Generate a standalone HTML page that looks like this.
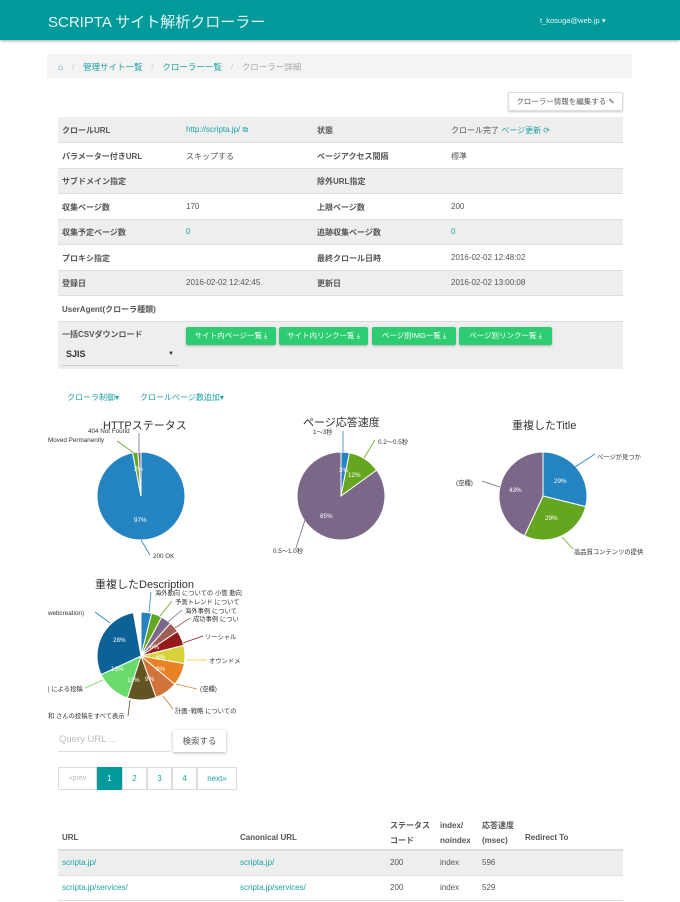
<!DOCTYPE html>
<html><head><meta charset="utf-8">
<style>
*{box-sizing:border-box;margin:0;padding:0}
body{width:680px;height:902px;overflow:hidden;background:#fff;font-family:"Liberation Sans","Noto Sans CJK JP",sans-serif;color:#555;font-size:8px;position:relative}
.a{position:absolute;white-space:nowrap}
.hdr{position:absolute;left:0;top:0;width:680px;height:40px;background:#009a9a;box-shadow:0 1px 3px rgba(0,0,0,.35)}
.teal{color:#1aa3a3}
.row{position:absolute;left:58px;width:565px;height:25.5px}
.g{background:#eeeeee}
.lbl{font-weight:bold;color:#555}
.btn{position:absolute;top:327px;height:18px;background:#2ecc71;color:#fff;font-size:7.5px;line-height:18px;text-align:center;border-radius:2px;box-shadow:0 1px 2px rgba(0,0,0,.25)}
.pg{position:absolute;top:767px;height:23px;border:1px solid #ddd;line-height:21px;text-align:center;color:#1aa3a3;font-size:8px;margin-left:-1px}
.lab{position:absolute;font-size:6.3px;color:#333;white-space:nowrap}
.ct{position:absolute;font-size:11px;color:#333;white-space:nowrap}
</style></head><body>
<div class="hdr"></div>
<div class="a" style="left:48px;top:11px;font-size:15px;color:#e8f7f7">SCRIPTA サイト解析クローラー</div>
<div class="a" style="left:540px;top:16px;font-size:7.5px;color:#e8f7f7">t_kosuga@web.jp ▾</div>

<div class="a" style="left:47px;top:54px;width:585px;height:24px;background:#f4f4f4"></div>
<div class="a" style="left:58px;top:61px;font-size:8.5px;word-spacing:2px"><span class="teal">&#8962;</span>&nbsp; <span style="color:#ccc">/</span>&nbsp; <span class="teal">管理サイト一覧</span>&nbsp; <span style="color:#ccc">/</span>&nbsp; <span class="teal">クローラー一覧</span>&nbsp; <span style="color:#ccc">/</span>&nbsp; <span style="color:#aaa">クローラー詳細</span></div>

<div class="a" style="left:508px;top:92px;width:115px;height:19px;border:1px solid #ddd;box-shadow:0 1px 2px rgba(0,0,0,.2);font-size:7.5px;line-height:17px;text-align:center;color:#555">クローラー情報を編集する ✎</div>

<div class="row g" style="top:117px"></div>
<div class="row" style="top:142.5px"></div>
<div class="row g" style="top:168px"></div>
<div class="row" style="top:193.5px"></div>
<div class="row g" style="top:219px"></div>
<div class="row" style="top:244.5px"></div>
<div class="row g" style="top:270px"></div>
<div class="row" style="top:295.5px"></div>
<div class="row g" style="top:321px;height:48px"></div>
<div class="a" style="left:58px;top:142px;width:565px;border-top:1px solid #ddd"></div>
<div class="a" style="left:58px;top:167.5px;width:565px;border-top:1px solid #ddd"></div>
<div class="a" style="left:58px;top:193px;width:565px;border-top:1px solid #ddd"></div>
<div class="a" style="left:58px;top:218.5px;width:565px;border-top:1px solid #ddd"></div>
<div class="a" style="left:58px;top:244px;width:565px;border-top:1px solid #ddd"></div>
<div class="a" style="left:58px;top:269.5px;width:565px;border-top:1px solid #ddd"></div>
<div class="a" style="left:58px;top:295px;width:565px;border-top:1px solid #ddd"></div>
<div class="a" style="left:58px;top:320.5px;width:565px;border-top:1px solid #ddd"></div>

<div class="a lbl" style="left:62px;top:125px">クロールURL</div>
<div class="a teal" style="left:186px;top:125px">http://scripta.jp/ ⧉</div>
<div class="a lbl" style="left:317px;top:125px">状態</div>
<div class="a" style="left:451px;top:125px">クロール完了 <span class="teal">ページ更新 ⟳</span></div>

<div class="a lbl" style="left:62px;top:151px">パラメーター付きURL</div>
<div class="a" style="left:186px;top:151px">スキップする</div>
<div class="a lbl" style="left:317px;top:151px">ページアクセス間隔</div>
<div class="a" style="left:451px;top:151px">標準</div>

<div class="a lbl" style="left:62px;top:176px">サブドメイン指定</div>
<div class="a lbl" style="left:317px;top:176px">除外URL指定</div>

<div class="a lbl" style="left:62px;top:202px">収集ページ数</div>
<div class="a" style="left:186px;top:202px">170</div>
<div class="a lbl" style="left:317px;top:202px">上限ページ数</div>
<div class="a" style="left:451px;top:202px">200</div>

<div class="a lbl" style="left:62px;top:227px">収集予定ページ数</div>
<div class="a teal" style="left:186px;top:227px">0</div>
<div class="a lbl" style="left:317px;top:227px">追跡収集ページ数</div>
<div class="a teal" style="left:451px;top:227px">0</div>

<div class="a lbl" style="left:62px;top:253px">プロキシ指定</div>
<div class="a lbl" style="left:317px;top:253px">最終クロール日時</div>
<div class="a" style="left:451px;top:253px">2016-02-02 12:48:02</div>

<div class="a lbl" style="left:62px;top:278px">登録日</div>
<div class="a" style="left:186px;top:278px">2016-02-02 12:42:45</div>
<div class="a lbl" style="left:317px;top:278px">更新日</div>
<div class="a" style="left:451px;top:278px">2016-02-02 13:00:08</div>

<div class="a lbl" style="left:62px;top:304px">UserAgent(クローラ種類)</div>

<div class="a lbl" style="left:62px;top:329px">一括CSVダウンロード</div>
<div class="a" style="left:62px;top:346px;width:116px;height:20px;border-bottom:1px solid #ccc;font-weight:bold;font-size:9px;color:#333;padding-left:4px;line-height:16px">SJIS<span style="position:absolute;right:4px;font-size:6px">▼</span></div>
<div class="btn" style="left:186px;width:90px">サイト内ページ一覧 ⤓</div>
<div class="btn" style="left:279px;width:89px">サイト内リンク一覧 ⤓</div>
<div class="btn" style="left:372px;width:84px">ページ別IMG一覧 ⤓</div>
<div class="btn" style="left:459px;width:93px">ページ別リンク一覧 ⤓</div>

<div class="a teal" style="left:67px;top:392px">クローラ制御▾</div>
<div class="a teal" style="left:140px;top:392px">クロールページ数追加▾</div>

<div class="ct" style="left:103px;top:417px">HTTPステータス</div>
<div class="ct" style="left:303px;top:414px">ページ応答速度</div>
<div class="ct" style="left:512px;top:417px">重複したTitle</div>
<div class="ct" style="left:95px;top:576px">重複したDescription</div>

<svg id="s" class="a" style="left:0;top:0" width="680" height="902"></svg>

<div class="lab" style="left:88px;top:428px">404 Not Found</div>
<div class="lab" style="left:48px;top:437px">Moved Permanently</div>
<div class="lab" style="left:134px;top:466px;color:#fff">2%</div>
<div class="lab" style="left:134px;top:517px;color:#fff">97%</div>
<div class="lab" style="left:153px;top:553px">200 OK</div>

<div class="lab" style="left:313px;top:427px">1〜3秒</div>
<div class="lab" style="left:378px;top:437px">0.2〜0.5秒</div>
<div class="lab" style="left:339px;top:467px;color:#fff">3%</div>
<div class="lab" style="left:348px;top:472px;color:#fff">12%</div>
<div class="lab" style="left:320px;top:513px;color:#fff">85%</div>
<div class="lab" style="left:273px;top:546px">0.5〜1.0秒</div>

<div class="lab" style="left:597px;top:452px">ページが見つか</div>
<div class="lab" style="left:456px;top:478px">(空欄)</div>
<div class="lab" style="left:554px;top:478px;color:#fff">29%</div>
<div class="lab" style="left:509px;top:487px;color:#fff">43%</div>
<div class="lab" style="left:545px;top:515px;color:#fff">29%</div>
<div class="lab" style="left:574px;top:547px">高品質コンテンツの提供</div>

<div class="lab" style="left:155px;top:588px">海外動向 についての 小管 動向</div>
<div class="lab" style="left:175px;top:597px">予測トレンド について</div>
<div class="lab" style="left:185px;top:606px">海外事例 について</div>
<div class="lab" style="left:193px;top:614px">成功事例 につい</div>
<div class="lab" style="left:205px;top:632px">ソーシャル</div>
<div class="lab" style="left:209px;top:656px">オウンドメ</div>
<div class="lab" style="left:200px;top:684px">(空欄)</div>
<div class="lab" style="left:175px;top:706px">計画･戦略 についての</div>
<div class="lab" style="left:48px;top:610px">webcreation)</div>
<div class="lab" style="left:48px;top:684px">| による投稿</div>
<div class="lab" style="left:48px;top:711px">和 さんの投稿をすべて表示</div>
<div class="lab" style="left:113px;top:637px;color:#fff">28%</div>
<div class="lab" style="left:111px;top:666px;color:#fff">13%</div>
<div class="lab" style="left:127px;top:677px;color:#fff">13%</div>
<div class="lab" style="left:145px;top:676px;color:#fff">9%</div>
<div class="lab" style="left:156px;top:666px;color:#fff">9%</div>
<div class="lab" style="left:156px;top:654px;color:#fff">6%</div>
<div class="lab" style="left:150px;top:644px;color:#fff">6%</div>

<div class="a" style="left:58px;top:730px;width:112px;height:22px;border-bottom:1px solid #ddd;color:#bbb;font-size:9.5px;line-height:20px;padding-left:1px">Query URL ...</div>
<div class="a" style="left:173px;top:730px;width:53px;height:22px;box-shadow:0 1px 3px rgba(0,0,0,.3);font-size:8.5px;line-height:22px;text-align:center;color:#555">検索する</div>

<div class="pg" style="left:59px;width:39px;color:#bbb;font-size:7px">«prev</div>
<div class="pg" style="left:98px;width:25px;background:#009a9a;color:#fff;border-color:#009a9a">1</div>
<div class="pg" style="left:123px;width:25px">2</div>
<div class="pg" style="left:148px;width:25px">3</div>
<div class="pg" style="left:173px;width:25px">4</div>
<div class="pg" style="left:198px;width:40px">next»</div>

<div class="a lbl" style="left:62px;top:833px">URL</div>
<div class="a lbl" style="left:240px;top:833px">Canonical URL</div>
<div class="a lbl" style="left:390px;top:818px;line-height:15px">ステータス<br>コード</div>
<div class="a lbl" style="left:440px;top:818px;line-height:15px">index/<br>noindex</div>
<div class="a lbl" style="left:482px;top:818px;line-height:15px">応答速度<br>(msec)</div>
<div class="a lbl" style="left:525px;top:833px">Redirect To</div>
<div class="a" style="left:58px;top:849px;width:565px;height:26px;background:#eee;border-top:2px solid #ddd"></div>
<div class="a" style="left:58px;top:875px;width:565px;border-top:1px solid #ddd"></div>
<div class="a" style="left:58px;top:900px;width:565px;border-top:1px solid #ddd"></div>
<div class="a teal" style="left:62px;top:858px">scripta.jp/</div>
<div class="a teal" style="left:240px;top:858px">scripta.jp/</div>
<div class="a" style="left:390px;top:858px">200</div>
<div class="a" style="left:440px;top:858px">index</div>
<div class="a" style="left:482px;top:858px">596</div>
<div class="a teal" style="left:62px;top:883px">scripta.jp/services/</div>
<div class="a teal" style="left:240px;top:883px">scripta.jp/services/</div>
<div class="a" style="left:390px;top:883px">200</div>
<div class="a" style="left:440px;top:883px">index</div>
<div class="a" style="left:482px;top:883px">529</div>

<script>
var s=document.getElementById('s'),h='';
function pt(cx,cy,r,a){a=a*Math.PI/180;return[(cx+r*Math.sin(a)).toFixed(2),(cy-r*Math.cos(a)).toFixed(2)];}
function pie(cx,cy,r,sl){var a=0;sl.forEach(function(x){var b=a+x[0],p=pt(cx,cy,r,a),q=pt(cx,cy,r,b);
h+='<path d="M'+cx+','+cy+' L'+p[0]+','+p[1]+' A'+r+','+r+' 0 '+(x[0]>180?1:0)+' 1 '+q[0]+','+q[1]+' Z" fill="'+x[1]+'" stroke="#fff" stroke-width="1"/>';a=b;});}
function ln(d,c){h+='<path d="'+d+'" fill="none" stroke="'+c+'" stroke-width="0.8"/>';}
pie(141,496,44,[[349,'#2484c1'],[7,'#65a620'],[4,'#7b6888']]);
pie(341,496,44,[[11,'#2484c1'],[43,'#65a620'],[306,'#7b6888']]);
pie(543,496,44,[[104,'#2484c1'],[101,'#65a620'],[155,'#7b6888']]);
pie(141,656,44,[[14,'#2484c1'],[14,'#65a620'],[14,'#7b6888'],[14,'#a05d56'],[20,'#961a1a'],[24,'#d8d23a'],[30,'#e98125'],[30,'#d0743c'],[38,'#635222'],[47,'#6ada6a'],[105,'#0c6197']]);
ln('M141,540 L150,555','#2484c1');ln('M134,453 L117,441','#65a620');ln('M139,452 L139,433','#7b6888');
ln('M343,452 L343,431','#2484c1');ln('M364,458 L375,440','#65a620');ln('M305,520 L296,548','#7b6888');
ln('M575,467 L595,454','#2484c1');ln('M500,487 L482,481','#7b6888');ln('M562,537 L573,549','#65a620');
ln('M149,612 L151,592','#2484c1');ln('M160,616 L172,601','#65a620');ln('M168,622 L182,610','#7b6888');ln('M175,628 L190,618','#a05d56');
ln('M183,643 L203,636','#961a1a');ln('M186,660 L207,660','#d8d23a');ln('M176,684 L197,689','#e98125');ln('M163,696 L173,709','#d0743c');
ln('M130,700 L128,716','#635222');ln('M103,680 L85,688','#6ada6a');ln('M110,623 L95,612','#2484c1');
s.innerHTML=h;
</script>
</body></html>
